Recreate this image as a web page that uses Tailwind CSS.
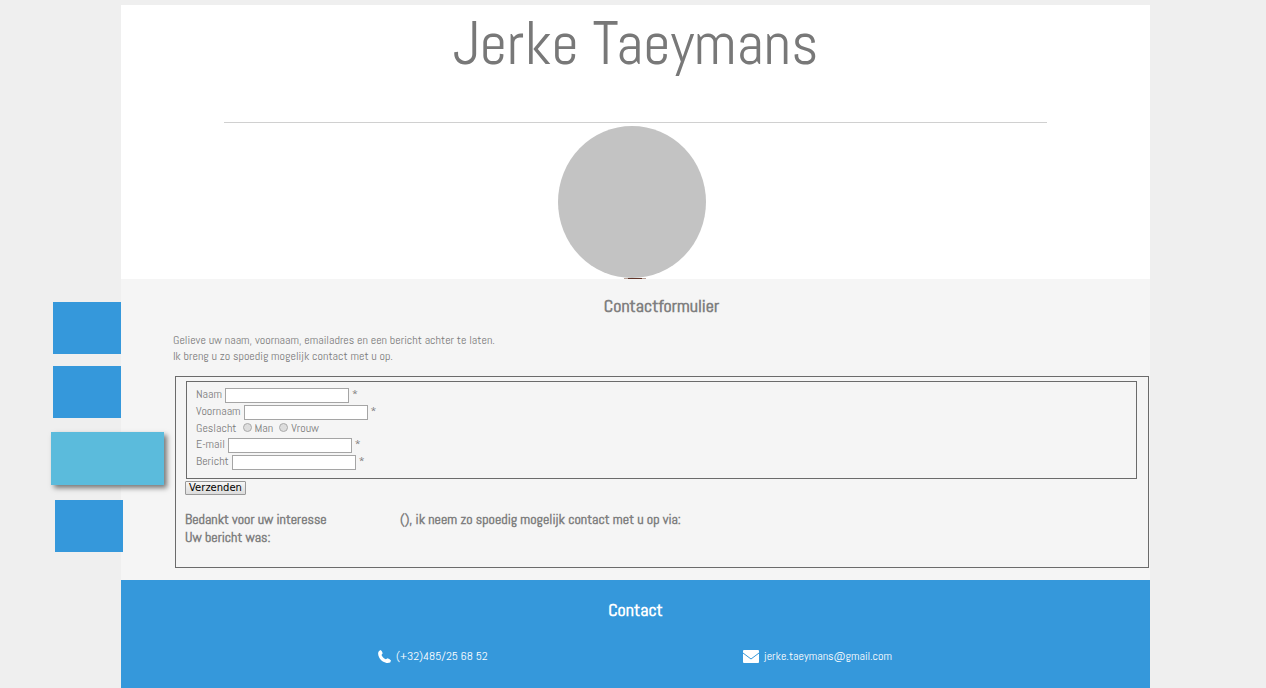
<!DOCTYPE html>
<html lang="nl">
<head>
<meta charset="utf-8">
<title>Jerke Taeymans</title>
<script src="https://cdn.jsdelivr.net/npm/@tailwindcss/browser@4"></script>
</head>
<body class="flex min-h-screen bg-[#efefef] pt-[5px] font-['Abel','Liberation_Sans_Narrow','Roboto_Condensed',sans-serif] text-[12px] leading-4 text-[#7c7c7c]">
  <nav aria-label="Menu" class="relative z-10 flex w-[121px] shrink-0 flex-col pt-[297px]">
    <a href="#home" aria-label="Home" class="ml-[53px] h-[52px] w-[68px] bg-[#3598db]"></a>
    <a href="#over" aria-label="Over mij" class="mt-3 ml-[53px] h-[52px] w-[68px] bg-[#3598db]"></a>
    <a href="#contact" aria-label="Contact" class="mt-3.5 ml-[51px] h-[53px] w-[113px] bg-[#5bbbdc] shadow-[3px_3px_5px_#777]"></a>
    <a href="#werk" aria-label="Werk" class="mt-[15px] ml-[55px] h-[52px] w-[68px] bg-[#3598db]"></a>
  </nav>
  <div class="mr-[116px] flex min-w-0 flex-1 flex-col bg-[#f5f5f5]">
    <header class="h-[274px] bg-white">
      <h1 class="h-[117px] pt-[3px] text-center text-[60px] leading-[72px] text-[#787878]">Jerke Taeymans</h1>
      <hr class="mx-auto w-4/5 border-[#d0d0d0]">
      <svg class="mx-auto mt-[3px] -translate-x-1" width="148" height="153" viewBox="0 0 148 153" aria-hidden="true">
        <ellipse cx="74" cy="76" rx="74" ry="76" fill="#c3c3c3"/>
        <path d="M66 152.5h22" stroke="#b9a49a"/><path d="M70 152.5h14" stroke="#623529"/>
      </svg>
    </header>
    <main class="ml-[52px] flex-1 pb-3">
      <h2 class="pt-[15px] text-center text-[18px] leading-6 font-bold text-[#808080]">Contactformulier</h2>
      <p class="mt-3.5">Gelieve uw naam, voornaam, emailadres en een bericht achter te laten.<br>Ik breng u zo spoedig mogelijk contact met u op.</p>
      <form class="mt-3 mr-px ml-0.5 h-[192px] border border-[#6b6b6b] pt-1 pr-[11px] pl-[9px]">
        <div class="ml-px flex h-[98px] flex-col border border-[#6b6b6b] pt-1 pl-[9px]">
          <div class="flex h-[17px] items-start gap-[3px]"><label for="naam">Naam</label><input id="naam" class="mt-0.5 h-[15px] w-[124px] border border-[#a5a5a5] bg-white px-1"><span>*</span></div>
          <div class="flex h-[17px] items-start gap-[3px]"><label for="voornaam">Voornaam</label><input id="voornaam" class="mt-0.5 h-[15px] w-[124px] border border-[#a5a5a5] bg-white px-1"><span>*</span></div>
          <div class="flex h-4 items-start gap-[3px]"><span class="mr-[3px]">Geslacht</span><input type="radio" name="geslacht" id="man" class="mt-[3px] size-[9px] appearance-none rounded-full border border-[#aaa] bg-[#ddd]"><label for="man" class="mr-[3px]">Man</label><input type="radio" name="geslacht" id="vrouw" class="mt-[3px] size-[9px] appearance-none rounded-full border border-[#aaa] bg-[#ddd]"><label for="vrouw">Vrouw</label></div>
          <div class="flex h-[17px] items-start gap-[3px]"><label for="email">E-mail</label><input id="email" type="email" class="mt-0.5 h-[15px] w-[124px] border border-[#a5a5a5] bg-white px-1"><span>*</span></div>
          <div class="flex h-[17px] items-start gap-[3px]"><label for="bericht">Bericht</label><input id="bericht" class="mt-0.5 h-[15px] w-[124px] border border-[#a5a5a5] bg-white px-1"><span>*</span></div>
        </div>
        <button type="button" class="mt-0.5 block h-3.5 w-[61px] rounded-[1px] border border-[#999] bg-linear-to-b from-[#f6f6f6] to-[#dcdcdc] text-center font-['DejaVu_Sans',sans-serif] text-[10px] leading-3 text-black">Verzenden</button>
        <p class="mt-[15px] flex text-[14px] leading-[18px] font-bold text-[#808080]"><span class="w-[215px]">Bedankt voor uw interesse</span><span>(), ik neem zo spoedig mogelijk contact met u op via:</span></p>
        <p class="text-[14px] leading-[18px] font-bold text-[#808080]">Uw bericht was:</p>
      </form>
    </main>
    <footer class="h-[108px] bg-[#3598db] text-white">
      <h2 class="pt-[18px] text-center text-[18px] leading-6 font-bold">Contact</h2>
      <div class="mt-[26px] flex">
        <a href="tel:+32485256852" class="ml-[257px] flex w-[365px] items-center gap-[5px]">
          <svg width="13" height="13" viewBox="0 0 13 13" fill="currentColor" aria-hidden="true"><path d="M1 1 2.700 0Q4 .8 4.700 3.300L3.500 4.900C4.300 6.800 5.700 8.400 7.800 9.300L9.600 8.300Q12 9 13 10.500L12.200 12.400C8.500 14 3.300 11.500 1.200 7.400 0 5-.4 2.500 1 1Z"/></svg>
          <span>(+32)485/25 68 52</span></a>
        <a href="mailto:jerke.taeymans@gmail.com" class="flex items-center gap-[5px]">
          <svg width="16" height="13" viewBox="0 0 16 13" aria-hidden="true"><rect width="16" height="13" rx="1" fill="#fff"/><path d="M0 3 8 9 16 3" fill="none" stroke="#3598db"/></svg>
          <span>jerke.taeymans@gmail.com</span></a>
      </div>
    </footer>
  </div>
</body>
</html>
